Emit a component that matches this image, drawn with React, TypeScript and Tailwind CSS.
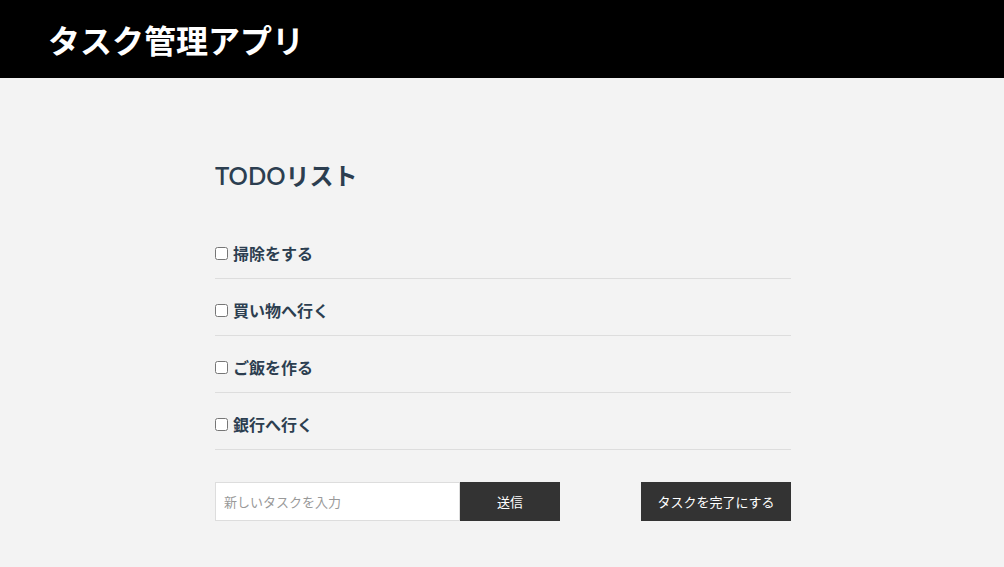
const tasks = ['掃除をする', '買い物へ行く', 'ご飯を作る', '銀行へ行く'];

const jp = { fontFamily: '"Noto Sans CJK JP", sans-serif' };

export default function App() {
  return (
    <div className="min-h-screen bg-[#f3f3f3]" style={jp}>
      {/* Header */}
      <header className="h-[78px] bg-black flex items-center px-12">
        <h1 className="text-[32px] font-bold text-white leading-none">タスク管理アプリ</h1>
      </header>

      <main className="pt-[80px]">
        <div className="w-[578px] mx-auto pl-[2px]">
          <h2
            className="text-[24px] leading-[36px] font-semibold text-[#2c3e50]"
            style={{ fontFamily: 'Lato, "Noto Sans CJK JP", sans-serif' }}
          >
            TODOリスト
          </h2>

          <ul className="mt-[28px]">
            {tasks.map((task) => (
              <li key={task} className="flex items-center gap-[5px] pt-[19px] pb-[13px] border-b border-[#dddddd]">
                <input type="checkbox" className="w-[13px] h-[13px] m-0" />
                <span className="text-[16px] leading-[24px] font-bold text-[#2c3e50]">{task}</span>
              </li>
            ))}
          </ul>

          <div className="mt-[32px] flex items-center justify-between">
            <div className="flex">
              <input
                type="text"
                placeholder="新しいタスクを入力"
                className="w-[245px] h-[39px] bg-white border border-[#dddddd] px-2 text-[13px] text-[#333] placeholder-[#999] outline-none"
              />
              <button className="w-[100px] h-[39px] bg-[#333333] text-white text-[13px]">送信</button>
            </div>
            <button className="w-[150px] h-[39px] bg-[#333333] text-white text-[13px]">タスクを完了にする</button>
          </div>
        </div>
      </main>
    </div>
  );
}
